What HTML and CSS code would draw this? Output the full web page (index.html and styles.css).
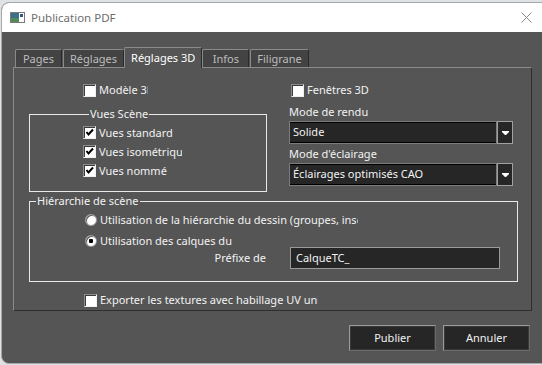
FILE: index.html
```html
<!DOCTYPE html>
<html lang="fr">
<head>
<meta charset="UTF-8">
<title>Publication PDF</title>
<link rel="stylesheet" href="styles.css">
</head>
<body>
<div class="window">
    <div class="titlebar">
        <svg class="app-icon" width="15" height="11" viewBox="0 0 15 11">
            <rect x="0.5" y="0.5" width="14" height="10" fill="#fff" stroke="#7a7a7a"/>
            <rect x="1" y="1" width="8" height="9" fill="#3d6f86"/>
            <rect x="1" y="6" width="8" height="4" fill="#4e8a5a"/>
            <rect x="10" y="2" width="3" height="3" fill="#2f5a8f"/>
        </svg>
        <span class="title">Publication PDF</span>
        <svg class="close" width="11" height="11" viewBox="0 0 11 11">
            <path d="M0.5 0.5 L10.5 10.5 M10.5 0.5 L0.5 10.5" stroke="#8a8a8a" stroke-width="1"/>
        </svg>
    </div>
    <div class="content">
        <div class="tabs">
            <div class="tab">Pages</div>
            <div class="tab">Réglages</div>
            <div class="tab active">Réglages 3D</div>
            <div class="tab">Infos</div>
            <div class="tab">Filigrane</div>
        </div>
        <div class="panel">
            <div class="top">
                <div class="col-left">
                    <label class="check model"><span class="box"></span><span class="clip w-model">Modèle 3D</span></label>
                    <fieldset class="group scene">
                        <legend>Vues Scène</legend>
                        <label class="check"><span class="box on"></span>Vues standard</label>
                        <label class="check"><span class="box on"></span><span class="clip w-iso">Vues isométriques</span></label>
                        <label class="check"><span class="box on"></span>Vues nommé</label>
                    </fieldset>
                </div>
                <div class="col-right">
                    <label class="check fen"><span class="box"></span>Fenêtres 3D</label>
                    <div class="field-label">Mode de rendu</div>
                    <div class="combo"><span class="combo-text">Solide</span><span class="arrow"></span></div>
                    <div class="field-label second">Mode d'éclairage</div>
                    <div class="combo"><span class="combo-text">Éclairages optimisés CAO</span><span class="arrow"></span></div>
                </div>
            </div>
            <fieldset class="group hier">
                <legend>Hiérarchie de scène</legend>
                <label class="radio"><span class="dot"></span><span class="clip w-hier">Utilisation de la hiérarchie du dessin (groupes, insertions)</span></label>
                <label class="radio"><span class="dot on"></span>Utilisation des calques du</label>
                <div class="prefix">
                    <span class="prefix-label">Préfixe de</span>
                    <div class="input">CalqueTC_</div>
                </div>
            </fieldset>
            <label class="check export"><span class="box"></span><span class="clip w-exp">Exporter les textures avec habillage UV unique</span></label>
        </div>
        <div class="buttons">
            <button class="btn">Publier</button>
            <button class="btn">Annuler</button>
        </div>
    </div>
</div>
</body>
</html>
```

FILE: styles.css
```css
html, body {
    margin: 0;
    padding: 0;
    overflow: hidden;
}
body {
    width: 542px;
    height: 365px;
    background: #dfe3e6;
    font: 11px/16px "Noto Sans", "Liberation Sans", sans-serif;
    color: #f2f2f2;
}
.window {
    margin: 2px 0 0 1px;
    width: 547px;
    height: 360px;
    border: 1px solid #a8a8a8;
    border-radius: 8px;
    overflow: hidden;
    background: #555;
}
.titlebar {
    display: flex;
    align-items: center;
    height: 29px;
    background: #fff;
    color: #6e6e6e;
}
.app-icon {
    margin: 0 6px 0 8px;
}
.title {
    flex: 1;
    font-size: 11.5px;
}
.close {
    margin-right: 17px;
}
.content {
    padding: 15px 17px 0 11px;
}
.tabs {
    display: flex;
    align-items: flex-end;
    padding-left: 2px;
    height: 20px;
}
.tab {
    min-width: 47px;
    height: 18px;
    padding: 0 6px;
    box-sizing: border-box;
    border: 1px solid #8a8a8a;
    border-bottom: 0;
    border-right-color: #2a2a2a;
    border-radius: 2px 2px 0 0;
    background: #434343;
    color: #bdbdbd;
    line-height: 17px;
    text-align: center;
}
.tab + .tab {
    margin-left: 1px;
}
.tab.active {
    position: relative;
    z-index: 1;
    height: 21px;
    margin: 0 0 -1px;
    padding: 0 6px;
    background: #555;
    color: #fff;
    line-height: 19px;
}
.tab.active + .tab {
    margin-left: 0;
}
.panel {
    box-sizing: border-box;
    height: 244px;
    border: 1px solid #8a8a8a;
    border-right-color: #2e2e2e;
    border-bottom-color: #2e2e2e;
    padding: 14px 0 0 15px;
}
.top {
    display: flex;
    gap: 22px;
}
.col-left {
    width: 238px;
}
.col-right {
    width: 224px;
}
.check, .radio {
    display: flex;
    align-items: center;
    height: 16px;
    white-space: nowrap;
}
.box {
    width: 13px;
    height: 13px;
    box-sizing: border-box;
    margin-right: 3px;
    border: 1px solid;
    border-color: #8c8c8c #f0f0f0 #f0f0f0 #8c8c8c;
    box-shadow: inset 1px 1px #3c3c3c;
    background: #fff;
    flex: none;
}
.box.on {
    background: #fff url("data:image/svg+xml;utf8,<svg xmlns='http://www.w3.org/2000/svg' width='11' height='11'><path d='M2.5 5 L4.5 7.5 L9 2.5' fill='none' stroke='black' stroke-width='2'/></svg>") no-repeat 0 0;
}
.clip {
    overflow: hidden;
}
.w-model { width: 49px; }
.w-iso { width: 83px; }
.w-hier { width: 258px; }
.w-exp { width: 218px; }
.model {
    margin-left: 54px;
}
.fen {
    margin-left: 2px;
}
.group {
    margin: 0;
    padding: 0;
    border: 1px solid #e8e8e8;
    min-width: 0;
}
.group legend {
    margin-left: 6px;
    padding: 0 1px;
    line-height: 14px;
}
.scene {
    margin-top: 9px;
    padding: 2px 0 11px 53px;
}
.scene .check {
    height: 19px;
}
.field-label {
    margin-top: 6px;
}
.field-label.second {
    margin-top: 2px;
}
.combo {
    display: flex;
    height: 23px;
    margin-top: 1px;
}
.combo-text {
    flex: 1;
    box-sizing: border-box;
    border: 1px solid #7c7c7c;
    box-shadow: inset 0 1px #000, inset 0 -1px #000;
    background: #262626;
    padding-left: 3px;
    line-height: 20px;
}
.arrow {
    width: 16px;
    box-sizing: border-box;
    border: 1px solid #a0a0a0;
    background: #262626 url("data:image/svg+xml;utf8,<svg xmlns='http://www.w3.org/2000/svg' width='7' height='4'><path d='M0 0 H7 V1 L4 4 H3 L0 1 Z' fill='white'/></svg>") no-repeat center 9px;
}
.hier {
    width: 487px;
    margin-top: 2px;
    padding: 0 0 12px;
}
.radio {
    margin: 4px 0 0 55px;
}
.radio + .radio {
    margin-top: 5px;
}
.dot {
    width: 12px;
    height: 12px;
    box-sizing: border-box;
    margin-right: 3px;
    border-radius: 50%;
    border: 1px solid #9a9a9a;
    box-shadow: inset 1px 1px #5a5a5a;
    background: #fff;
    flex: none;
}
.dot.on {
    background: radial-gradient(circle, #000 0 2px, #fff 2.5px);
}
.prefix {
    display: flex;
    align-items: center;
    margin-top: -2px;
}
.prefix-label {
    width: 236px;
    margin-right: 24px;
    text-align: right;
}
.input {
    width: 210px;
    height: 22px;
    box-sizing: border-box;
    border: 1px solid #9a9a9a;
    background: #262626;
    padding-left: 5px;
    line-height: 19px;
}
.export {
    margin: 10px 0 0 55px;
}
.buttons {
    display: flex;
    justify-content: flex-end;
    gap: 7px;
    margin: 14px 2px 0 0;
}
.btn {
    width: 87px;
    height: 26px;
    border: 1px solid;
    border-color: #9a9a9a #6a6a6a #6a6a6a #9a9a9a;
    box-shadow: inset 0 0 0 1px #3a3a3a;
    background: #262626;
    color: #f2f2f2;
    font: inherit;
    padding: 0;
}
```
